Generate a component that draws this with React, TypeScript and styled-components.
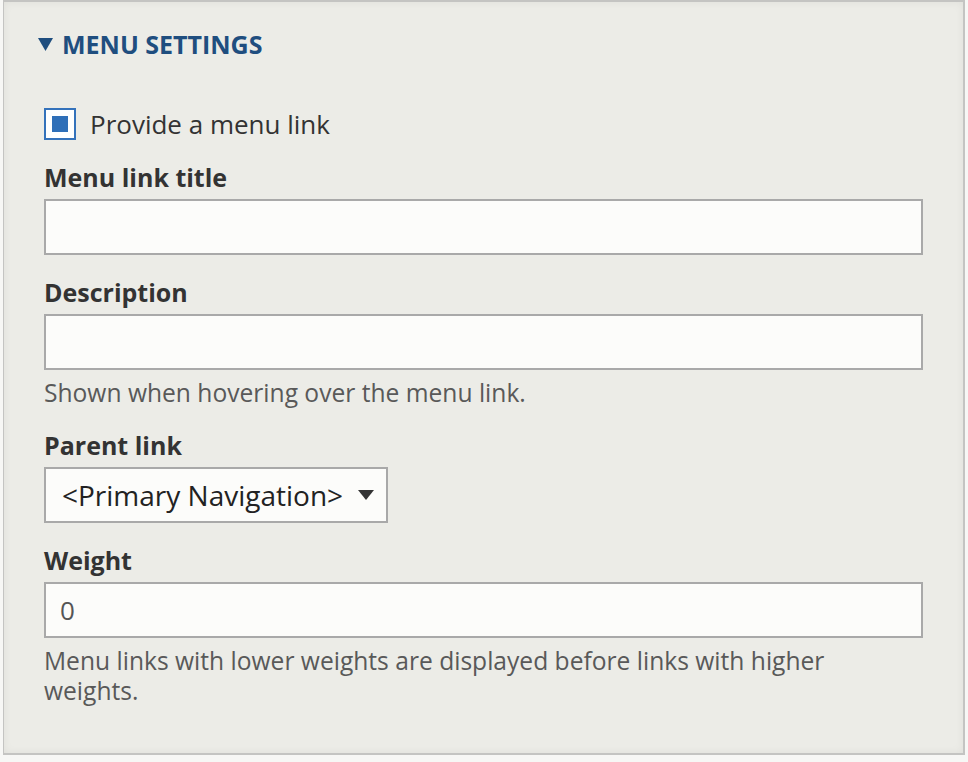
import React from 'react';
import styled, { createGlobalStyle } from 'styled-components';

const GlobalStyle = createGlobalStyle`
  html, body {
    margin: 0;
    padding: 0;
    background: #f7f7f5;
  }
  body {
    font-family: "Open Sans", "Liberation Sans", sans-serif;
    color: #333;
  }
`;

// The collapsible panel, cropped at the top of the screenshot
const Details = styled.section`
  margin: 0 3px;
  width: 962px;
  box-sizing: border-box;
  background: #ecece7;
  border: 2px solid #c4c4c2;
  border-left-width: 1px;
  box-shadow: inset 0 0 8px rgba(0, 0, 0, 0.06);
  padding: 0 40px 47px 40px;
`;

const Summary = styled.div`
  display: flex;
  align-items: center;
  height: 84px;
  margin-left: -6px;
  gap: 9px;
  color: #1f4e7f;
  font-weight: 700;
  font-size: 25px;
  text-transform: uppercase;
`;

const Triangle = styled.svg`
  width: 15px;
  height: 13px;
  flex: none;
`;

const CheckRow = styled.label`
  display: flex;
  align-items: center;
  gap: 14px;
  font-size: 26px;
  height: 34px;
  margin: 21px 0 19px 0;
`;

const Box = styled.span`
  width: 32px;
  height: 32px;
  box-sizing: border-box;
  border: 2px solid #3472bb;
  background: #fff;
  display: flex;
  align-items: center;
  justify-content: center;
  flex: none;
  &::after {
    content: '';
    width: 16px;
    height: 16px;
    background: #2f6fb8;
  }
`;

const Field = styled.div`
  display: flex;
  flex-direction: column;
  align-items: flex-start;
  & + & {
    margin-top: 20px;
  }
`;

const Label = styled.div`
  font-size: 25px;
  font-weight: 700;
  line-height: 34px;
  color: #333;
  margin-bottom: 5px;
`;

const Input = styled.div`
  width: 100%;
  height: 56px;
  box-sizing: border-box;
  border: 2px solid #a9a9a9;
  background: #fcfcfa;
  font-size: 26px;
  color: #555;
  display: flex;
  align-items: center;
  padding: 0 14px;
`;

const Select = styled.div`
  height: 56px;
  box-sizing: border-box;
  border: 2px solid #a9a9a9;
  background: #fcfcfa;
  font-size: 28px;
  color: #222;
  display: flex;
  align-items: center;
  gap: 15px;
  padding: 0 12px 0 16px;
`;

const Help = styled.div`
  font-size: 24.6px;
  line-height: 30px;
  color: #595959;
  margin-top: 8px;
`;

export default function App() {
  return (
    <>
      <GlobalStyle />
      <Details>
        <Summary>
          <Triangle viewBox="0 0 15 13">
            <polygon points="0,0 15,0 7.5,13" fill="#1f4e7f" />
          </Triangle>
          Menu settings
        </Summary>
        <CheckRow>
          <Box />
          Provide a menu link
        </CheckRow>
        <Field>
          <Label>Menu link title</Label>
          <Input />
        </Field>
        <Field>
          <Label>Description</Label>
          <Input />
          <Help>Shown when hovering over the menu link.</Help>
        </Field>
        <Field>
          <Label>Parent link</Label>
          <Select>
            &lt;Primary Navigation&gt;
            <svg width="16" height="10" viewBox="0 0 16 10">
              <polygon points="0,0 16,0 8,10" fill="#333" />
            </svg>
          </Select>
        </Field>
        <Field>
          <Label>Weight</Label>
          <Input>0</Input>
          <Help>
            Menu links with lower weights are displayed before links with higher weights.
          </Help>
        </Field>
      </Details>
    </>
  );
}
